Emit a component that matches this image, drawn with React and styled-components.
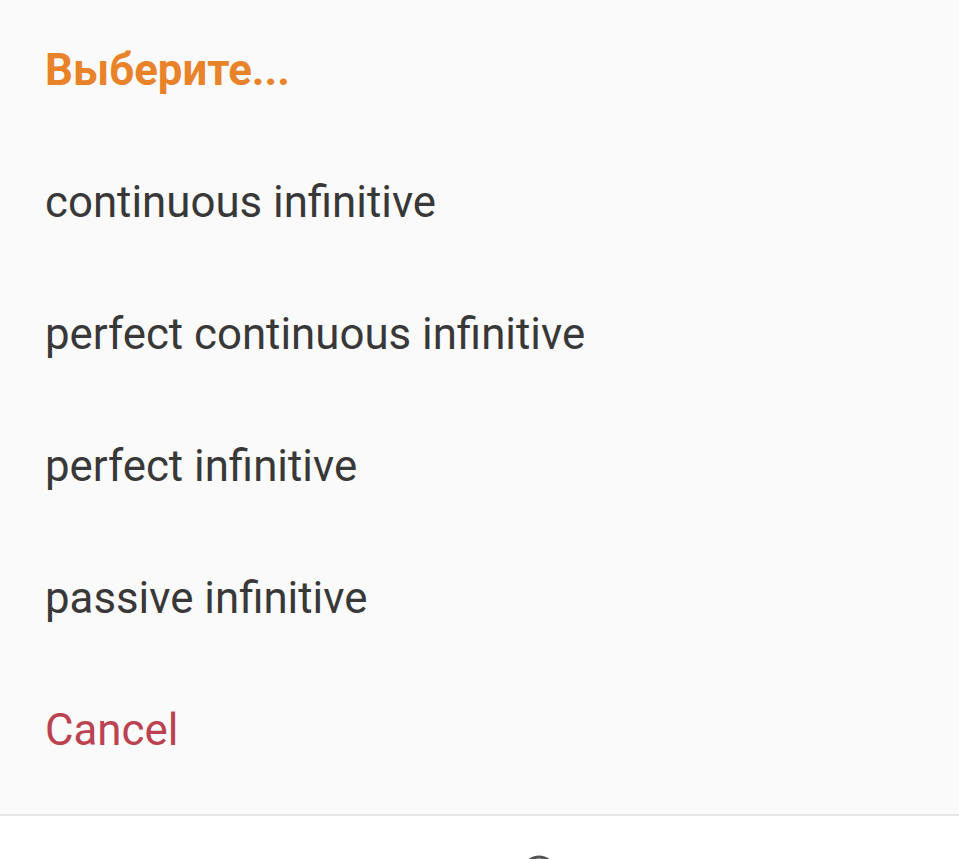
import styled, { createGlobalStyle } from "styled-components";

const GlobalStyle = createGlobalStyle`
  html, body {
    margin: 0;
    padding: 0;
    background: #ffffff;
    font-family: Roboto, "Noto Sans", sans-serif;
    overflow: hidden;
  }
`;

const Screen = styled.div`
  width: 959px;
  height: 859px;
  display: flex;
  flex-direction: column;
  overflow: hidden;
`;

const Sheet = styled.div`
  background: #fafafa;
  padding: 4px 0 18px;
  border-bottom: 2px solid #e6e6e6;
  display: flex;
  flex-direction: column;
`;

const Row = styled.div`
  height: 132px;
  display: flex;
  align-items: center;
  padding: 0 45px;
  font-size: 43.8px;
  color: ${(p) => p.$color || "#383838"};
  font-weight: ${(p) => (p.$bold ? 700 : 400)};
`;

const NavBar = styled.div`
  flex: 1;
  background: #ffffff;
  display: flex;
  justify-content: center;
  padding-top: 37px;
  padding-left: 118px;
`;

const items = [
  "continuous infinitive",
  "perfect continuous infinitive",
  "perfect infinitive",
  "passive infinitive",
];

export default function App() {
  return (
    <Screen>
      <GlobalStyle />
      <Sheet>
        <Row $bold $color="#e8832a">Выберите...</Row>
        {items.map((t) => (
          <Row key={t}>{t}</Row>
        ))}
        <Row $color="#bb4250">Cancel</Row>
      </Sheet>
      <NavBar>
        <svg width="40" height="40" viewBox="0 0 40 40">
          <circle cx="20" cy="20" r="16" fill="none" stroke="#555" strokeWidth="3" />
        </svg>
      </NavBar>
    </Screen>
  );
}
